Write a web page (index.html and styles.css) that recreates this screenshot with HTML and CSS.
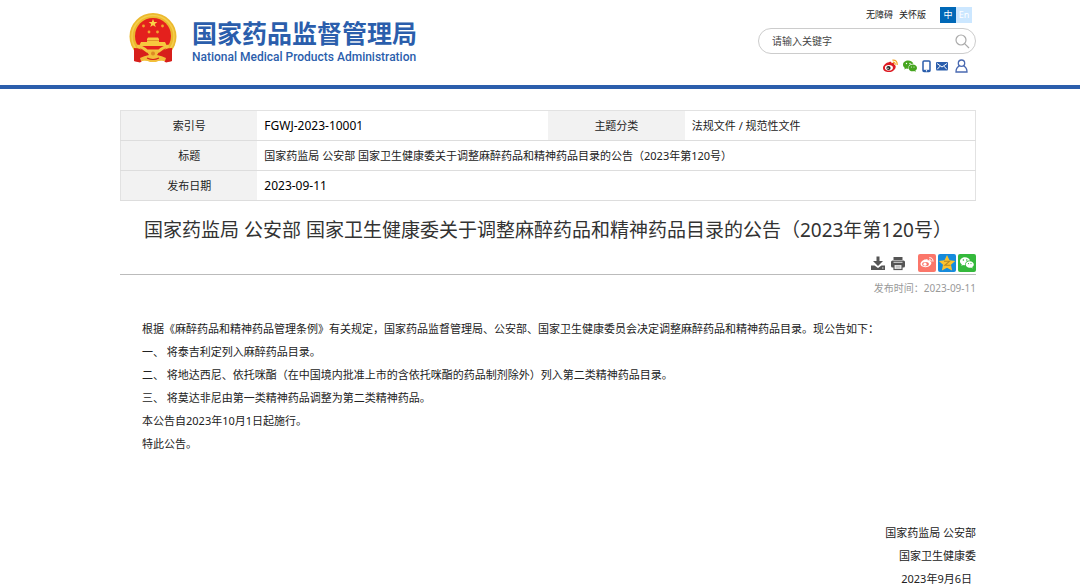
FILE: index.html
```html
<!DOCTYPE html>
<html lang="zh-CN">
<head>
<meta charset="utf-8">
<title>国家药品监督管理局</title>
<link rel="stylesheet" href="styles.css">
</head>
<body>
<header class="site-header">
  <div class="wrap header-inner">
    <a class="brand" href="#">
      <svg class="emblem" viewBox="0 0 48 52" aria-hidden="true">
        <path d="M6 34 L24 38 L42 34 L43 49 L37 50 L33 47 L24 49 L15 47 L11 50 L5 49 Z" fill="#d9201c"/>
        <circle cx="24" cy="24.500" r="23.500" fill="#ecb92e"/>
        <circle cx="24" cy="24.500" r="21" fill="none" stroke="#f4cd4c" stroke-width="1.500"/>
        <circle cx="24" cy="24" r="18" fill="#e4201d"/>
        <path d="M24 7l1.200 3h3.200l-2.600 2 1 3.100L24 13.200l-2.800 1.900 1-3.100-2.600-2h3.200z" fill="#f9d548"/>
        <g fill="#f0a52e"><circle cx="14.500" cy="14" r="1.400"/><circle cx="33.500" cy="14" r="1.400"/><circle cx="20" cy="20" r="1.400"/><circle cx="28.500" cy="20" r="1.400"/></g>
        <path d="M18 27l1-1.500h10l1 1.500v3h6l2 4H10l2-4h6z" fill="#f7c83f"/>
        <path d="M18 28.500h12" stroke="#e0982a" stroke-width="1"/>
        <path d="M5 36c5 0 8 2 11 3.500h16c3-1.500 6-3.500 11-3.500v13l-6 1.500-4-3-9 2-9-2-4 3L5 49z" fill="#d71f1b"/>
        <path d="M8 34q6 1 10 5h12q4-4 10-5" stroke="#f3c541" stroke-width="3" fill="none"/>
        <path d="M18 40l6-2 6 2-2 3q5 1 9 3l-1 3q-6-1-9 1h-6q-3-2-9-1l-1-3q4-2 9-3z" fill="#f2bf3a"/>
        <circle cx="24" cy="41.500" r="2" fill="#dd8a24"/>
        <path d="M18 46q6 3 12 0" stroke="#d71f1b" stroke-width="1.200" fill="none"/>
      </svg>
      <span class="brand-text">
        <span class="brand-cn">国家药品监督管理局</span>
        <span class="brand-en">National Medical Products Administration</span>
      </span>
    </a>
    <div class="tools">
      <nav class="top-links">
        <a href="#">无障碍</a>
        <a href="#">关怀版</a>
        <span class="lang"><a class="lang-cn" href="#">中</a><a class="lang-en" href="#">En</a></span>
      </nav>
      <form class="search">
        <input type="text" aria-label="搜索" placeholder="请输入关键字">
        <button type="button" aria-label="搜索">
          <svg width="16" height="16" viewBox="0 0 16 16" fill="none" stroke="#aaa" stroke-width="1.200"><circle cx="7" cy="7" r="5"/><path d="M10.600 10.600L15 15"/></svg>
        </button>
      </form>
      <nav class="social">
        <a href="#" aria-label="微博"><svg width="15" height="14" viewBox="0 0 15 14"><path d="M6 3.200c1.500-.8 2.700-.3 2.500 1 2-.6 3 .1 2.600 1.300C13 6.500 13 8 12.300 9.400 11 11.800 8.500 13 5.800 13 2.500 13 0 11.400 0 8.900 0 6.600 3.300 3.100 6 3.200z" fill="#dd1a22"/><ellipse cx="5.900" cy="8.800" rx="4" ry="2.800" fill="#fff"/><circle cx="5.500" cy="9" r="2.100" fill="#222"/><circle cx="5" cy="9.300" r=".7" fill="#fff"/><path d="M9.700 3.300q2.600-.4 2.500 2.400M9.400 1.200q5-.6 4.800 4.800" stroke="#f5a52a" stroke-width="1.300" fill="none"/></svg></a>
        <a href="#" aria-label="微信"><svg width="14" height="14" viewBox="0 0 14 14"><path d="M5.200 1.500C2.300 1.500 0 3.300 0 5.700c0 1.300.7 2.400 1.800 3.200l-.5 1.500 1.900-.9c.8.200 1.500.3 2.300.2-.6-3 1.800-5 4.900-4.900C9.900 2.800 7.700 1.500 5.200 1.500z" fill="#46a51f"/><path d="M9.700 5.500C7.300 5.500 5.600 7 5.600 8.900s1.800 3.400 4.100 3.400c.5 0 1-.1 1.500-.2l1.500.8-.4-1.300c1-.7 1.700-1.600 1.700-2.700 0-1.900-1.900-3.400-4.300-3.400z" fill="#46a51f"/><g fill="#fff"><circle cx="3.500" cy="4.500" r=".7"/><circle cx="7" cy="4.500" r=".7"/><circle cx="8.400" cy="7.900" r=".5"/><circle cx="11" cy="7.900" r=".5"/></g></svg></a>
        <a href="#" aria-label="手机"><svg width="9" height="14" viewBox="0 0 9 14"><rect x="1" y="2" width="7" height="10.500" rx="1" fill="none" stroke="#2b5eac" stroke-width="1.500"/><path d="M1 11.800h7" stroke="#2b5eac" stroke-width="2"/><circle cx="4.500" cy="11.800" r=".7" fill="#fff"/></svg></a>
        <a href="#" aria-label="邮箱"><svg width="12" height="14" viewBox="0 0 12 14"><rect y="3" width="12" height="8.500" rx="1" fill="#2b5eac"/><path d="M1 4.500l5 3.500 5-3.500M1.200 10.300L4 7.200M10.800 10.300L8 7.200" fill="none" stroke="#fff" stroke-width="1"/></svg></a>
        <a class="user" href="#" aria-label="登录"><svg width="13" height="14" viewBox="0 0 13 14" fill="none" stroke="#4969b1" stroke-width="1.300"><circle cx="6.500" cy="4.200" r="3.200"/><path d="M4.200 7.200Q1 8.600 1 13h11q0-4.400-3.200-5.800"/></svg></a>
      </nav>
    </div>
  </div>
</header>

<main class="wrap">
  <table class="meta">
    <tbody>
      <tr><th scope="row">索引号</th><td class="code">FGWJ-2023-10001</td><th scope="row">主题分类</th><td>法规文件 / 规范性文件</td></tr>
      <tr><th scope="row">标题</th><td colspan="3">国家药监局 公安部 国家卫生健康委关于调整麻醉药品和精神药品目录的公告（2023年第120号）</td></tr>
      <tr><th scope="row">发布日期</th><td class="code" colspan="3">2023-09-11</td></tr>
    </tbody>
  </table>

  <article>
    <h1>国家药监局 公安部 国家卫生健康委关于调整麻醉药品和精神药品目录的公告（2023年第120号）</h1>
    <div class="actions">
      <button type="button" aria-label="下载"><svg width="14" height="18" viewBox="0 0 14 18" fill="#555"><path d="M5.500 2.500h3V7H12l-5 5-5-5h3.500z"/><path d="M0 11.500h3.500L7 14l3.500-2.500H14V16H0z"/><path d="M11 14h1.500" stroke="#fff" stroke-width=".8"/></svg></button>
      <button type="button" aria-label="打印"><svg width="14" height="18" viewBox="0 0 14 18"><path d="M2.500 3h9v3h-9z" fill="#555"/><rect y="6.500" width="14" height="7" rx="1.500" fill="#555"/><path d="M2.500 8.300h9" stroke="#fff" stroke-width=".8"/><rect x="3" y="10.500" width="8" height="5" fill="#fff" stroke="#555" stroke-width="1.200"/><path d="M4.500 12.200h5M4.500 13.900h5" stroke="#888" stroke-width=".7"/></svg></button>
      <span class="share">
        <a href="#" aria-label="分享到微博"><svg width="18" height="18" viewBox="0 0 18 18"><rect width="18" height="18" rx="2" fill="#fb766a"/><path d="M7.500 5.500c1.500-.7 2.500-.2 2.300.9 1.700-.4 2.600.1 2.300 1.200 1.400.5 1.500 1.600.9 2.700-1 1.900-3.300 2.900-5.700 2.900-2.900 0-4.800-1.300-4.800-3.100 0-1.900 2.800-4.700 5-4.600z" fill="#fff"/><ellipse cx="7.500" cy="10.100" rx="3.400" ry="2.200" fill="#fb766a"/><circle cx="7" cy="10.200" r="1.600" fill="#fff"/><path d="M11.300 5.600q2-.2 1.900 2M11.200 3.700q4-.2 3.800 4" stroke="#fff" stroke-width="1" fill="none"/></svg></a>
        <a href="#" aria-label="分享到QQ空间"><svg width="18" height="18" viewBox="0 0 18 18"><rect width="18" height="18" rx="2" fill="#168bdc"/><path d="M9 1l2.500 5.200 5.700.7-4.200 3.900 1.100 5.600L9 13.700l-5.100 2.700L5 10.800.8 6.900l5.700-.7z" fill="#fcc22d"/><path d="M6 7.300h5.500L6.800 11.300h5.700" stroke="#b98820" stroke-width="1.100" fill="none"/></svg></a>
        <a href="#" aria-label="分享到微信"><svg width="18" height="18" viewBox="0 0 18 18"><rect width="18" height="18" rx="2" fill="#34b93c"/><path d="M7 3.200C4.200 3.200 2 5 2 7.200c0 1.300.7 2.300 1.800 3.100l-.5 1.500 1.800-.9c.7.200 1.400.3 2.100.2-.4-2.700 1.800-4.700 4.800-4.600C11.500 4.500 9.500 3.200 7 3.200z" fill="#fff"/><path d="M11.700 7.200C9.400 7.200 7.700 8.700 7.700 10.500s1.700 3.300 4 3.300c.5 0 1-.1 1.400-.2l1.500.8-.4-1.300c1-.7 1.600-1.600 1.600-2.600 0-1.800-1.800-3.300-4.100-3.300z" fill="#fff"/><g fill="#34b93c"><circle cx="5.400" cy="6" r=".8"/><circle cx="8.800" cy="6" r=".8"/><circle cx="10.500" cy="9.600" r=".6"/><circle cx="13" cy="9.600" r=".6"/></g></svg></a>
      </span>
    </div>
    <p class="pub-date">发布时间：2023-09-11</p>
    <div class="content">
      <p>根据《麻醉药品和精神药品管理条例》有关规定，国家药品监督管理局、公安部、国家卫生健康委员会决定调整麻醉药品和精神药品目录。现公告如下：</p>
      <p>一、 将泰吉利定列入麻醉药品目录。</p>
      <p>二、 将地达西尼、依托咪酯（在中国境内批准上市的含依托咪酯的药品制剂除外）列入第二类精神药品目录。</p>
      <p>三、 将莫达非尼由第一类精神药品调整为第二类精神药品。</p>
      <p>本公告自2023年10月1日起施行。</p>
      <p>特此公告。</p>
    </div>
    <div class="signature">
      <p>国家药监局 公安部</p>
      <p>国家卫生健康委</p>
      <p class="sign-date">2023年9月6日</p>
    </div>
  </article>
</main>
</body>
</html>
```
FILE: styles.css
```css
* {
  box-sizing: border-box;
}

body {
  margin: 0;
  background: #fff;
  color: #222;
  font-family: "Noto Sans", "Noto Sans CJK SC", sans-serif;
  font-size: 11px;
  line-height: 23px;
}

a {
  color: inherit;
  text-decoration: none;
}

p,
h1 {
  margin: 0;
}

svg {
  display: block;
}

button {
  padding: 0;
  border: 0;
  background: none;
}

.wrap {
  padding: 0 104px 0 120px;
}

.site-header {
  border-bottom: 4px solid #2b5eac;
}

.header-inner {
  display: flex;
  justify-content: space-between;
  padding-top: 7px;
  padding-bottom: 12px;
}

.brand {
  display: flex;
  align-items: flex-start;
  gap: 15px;
  padding: 5px 0 0 9px;
  color: #2b5eac;
}

.emblem {
  width: 48px;
  height: 52px;
}

.brand-text {
  display: flex;
  flex-direction: column;
  padding-top: 4px;
}

.brand-cn {
  font-family: "Noto Sans CJK SC", sans-serif;
  font-size: 25px;
  font-weight: 700;
  line-height: 32px;
}

.brand-en {
  font-family: Roboto, sans-serif;
  font-size: 12px;
  font-weight: 500;
  line-height: 18px;
}

.tools {
  display: flex;
  flex-direction: column;
  align-items: flex-end;
  width: 218px;
}

.top-links {
  display: flex;
  gap: 6px;
  padding-right: 4px;
  font-size: 9px;
  line-height: 16px;
}

.lang {
  display: flex;
  margin-left: 8px;
  color: #fff;
  text-align: center;
}

.lang a {
  width: 16px;
}

.lang-cn {
  background: #0068b7;
}

.lang-en {
  background: #cce7ff;
}

.search {
  display: flex;
  align-items: center;
  width: 100%;
  height: 26px;
  margin-top: 5px;
  padding: 0 5px 0 13px;
  border: 1px solid #ccc;
  border-radius: 13px;
}

.search input {
  flex: 1;
  min-width: 0;
  padding: 0;
  border: 0;
  outline: 0;
  background: none;
  font-family: inherit;
  font-size: 10px;
}

.search input::placeholder {
  color: #444;
}

.social {
  display: flex;
  gap: 5px;
  padding: 5px 8px 0 0;
}

.user {
  margin-left: 2px;
}

.meta {
  width: 100%;
  margin-top: 21px;
  border-collapse: collapse;
  table-layout: fixed;
  border: 1px solid #e2e2e2;
}

.meta tr {
  border-bottom: 1px solid #ddd;
}

.meta th,
.meta td {
  width: 34%;
  height: 30px;
  padding: 0 7px;
  line-height: 20px;
  text-align: left;
}

.meta th {
  width: 16%;
  background: #f2f2f2;
  font-weight: 400;
  text-align: center;
}

.meta .code {
  color: #000;
  font-size: 12px;
}

h1 {
  padding-top: 14px;
  color: #333;
  font-size: 19px;
  font-weight: 400;
  line-height: 30px;
  text-align: center;
}

.actions {
  display: flex;
  justify-content: flex-end;
  gap: 6px;
  padding: 9px 0 2px;
  border-bottom: 1px solid #bbb;
}

.share {
  display: flex;
  gap: 2px;
  margin-left: 7px;
}

.pub-date {
  padding-top: 2px;
  color: #999;
  font-size: 10px;
  text-align: right;
}

.content {
  padding: 17px 22px 0;
}

.signature {
  padding-top: 66px;
  text-align: right;
}

.sign-date {
  padding-right: 4px;
}
```
